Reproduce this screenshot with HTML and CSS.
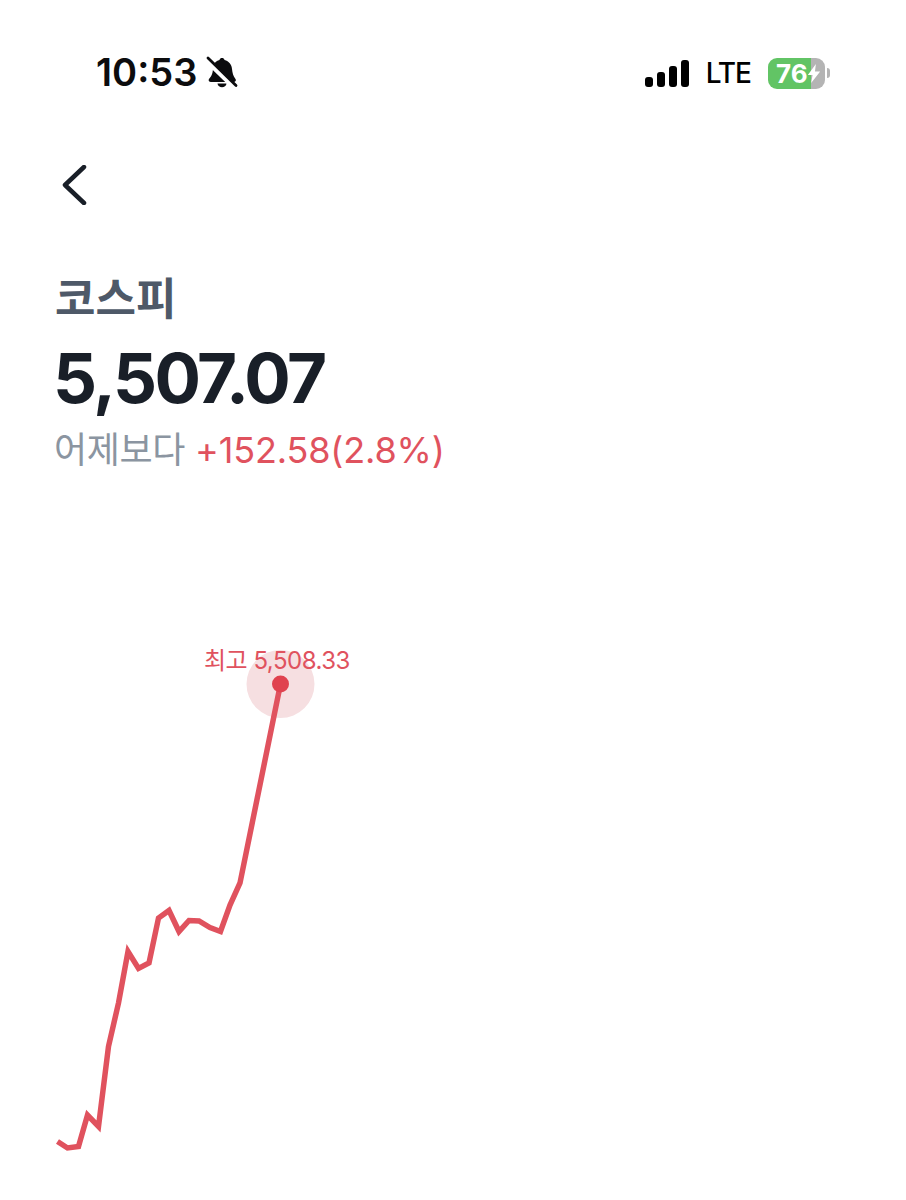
FILE: index.html
```html
<!DOCTYPE html>
<html lang="ko">
<head>
    <meta charset="UTF-8">
    <meta name="viewport" content="width=device-width, initial-scale=1.0">
    <title>코스피</title>
    <link rel="stylesheet" href="styles.css">
</head>
<body>
    <div class="status-bar">
        <div class="status-left">
            <span class="time">10:53</span>
            <svg class="bell" width="32" height="34" viewBox="0 0 32 34">
                <path d="M13.500 4c.6-2.600 4.400-2.600 5 0 4.500 1.200 7 4.500 7.500 9 .4 4 1.200 7 3.500 10 1 1.500 0 3-1.800 3H5c-2 0-3-1.500-2-3 1.700-2 3-4 3.500-6.500.5-2.500.5-4.500 1-6.500.7-3 3-5.500 6-6z" fill="#0c0c0e"/>
                <path d="M11.500 27.500h9c-.6 5-8.400 5-9 0z" fill="#0c0c0e"/>
                <path d="M1 5 29 32" stroke="#fff" stroke-width="5"/>
                <path d="M2 2 30 29.500" stroke="#0c0c0e" stroke-width="2.800" stroke-linecap="round"/>
            </svg>
        </div>
        <div class="status-right">
            <div class="signal">
                <span class="bar bar-1"></span>
                <span class="bar bar-2"></span>
                <span class="bar bar-3"></span>
                <span class="bar bar-4"></span>
            </div>
            <span class="network">LTE</span>
            <div class="battery">
                <div class="battery-body">
                    <span class="battery-level">76</span>
                    <svg class="bolt" width="14" height="19" viewBox="0 0 13 20">
                        <path d="M8.500 0 0 11.500h5L3.500 20 13 8H7.500z" fill="#fff"/>
                    </svg>
                </div>
                <span class="battery-cap"></span>
            </div>
        </div>
    </div>

    <div class="back">
        <svg width="26" height="40" viewBox="0 0 26 40">
            <path d="M23 2 4 20 23 38" fill="none" stroke="#191f28" stroke-width="4.500" stroke-linecap="round" stroke-linejoin="round"/>
        </svg>
    </div>

    <div class="summary">
        <h1 class="name">코스피</h1>
        <div class="price">5,507.07</div>
        <div class="change">
            <span class="change-label">어제보다</span>
            <span class="change-value">+152.58(2.8%)</span>
        </div>
    </div>

    <div class="chart">
        <svg class="chart-line" width="906" height="560" viewBox="0 0 906 560">
            <circle cx="280.500" cy="84" r="34" fill="#f6dfe1"/>
            <polyline points="57.500,541.500 67.500,548 78.500,546.500 87.500,515 98.500,526.500 108.500,446.500 118.500,403 128,351.500 138.500,368.500 149,363 158.500,318 169,310.500 179,331.500 189,320.500 199,321 210,327.500 220.500,331.500 230,305 240,283 280.500,84" fill="none" stroke="#e0525e" stroke-width="5.500" stroke-linejoin="miter"/>
            <circle cx="280.500" cy="84" r="8.500" fill="#e0424f"/>
        </svg>
        <span class="high-label">최고 5,508.33</span>
    </div>
</body>
</html>
```

FILE: styles.css
```css
body {
    margin: 0;
    background-color: #fff;
    font-family: Inter, "Noto Sans CJK KR", sans-serif;
    color: #191f28;
}
.status-bar {
    display: flex;
    justify-content: space-between;
    align-items: center;
    height: 50px;
    padding: 48px 76px 0 96px;
}
.status-left {
    display: flex;
    align-items: center;
    gap: 9px;
}
.time {
    font-size: 38px;
    font-weight: 600;
    line-height: 48px;
    margin-top: -2px;
    color: #0c0c0e;
}
.status-right {
    display: flex;
    align-items: center;
}
.signal {
    display: flex;
    align-items: flex-end;
    gap: 4px;
    height: 28px;
}
.bar {
    width: 8px;
    background-color: #000;
    border-radius: 3px;
}
.bar-1 { height: 10px; }
.bar-2 { height: 15px; }
.bar-3 { height: 21px; }
.bar-4 { height: 27px; }
.network {
    margin-left: 17px;
    font-size: 28px;
    font-weight: 500;
    letter-spacing: -1px;
    color: #000;
}
.battery {
    display: flex;
    align-items: center;
    margin-left: 17px;
}
.battery-body {
    display: flex;
    align-items: center;
    width: 57px;
    height: 31px;
    border-radius: 9px;
    background: linear-gradient(to right, #62c465 0 43px, #b4b4b4 43px);
}
.battery-level {
    margin-left: 8px;
    font-size: 26px;
    font-weight: 700;
    line-height: 31px;
    color: #fff;
}
.bolt {
    margin-left: -1px;
}
.battery-cap {
    width: 3px;
    height: 10px;
    margin-left: 2px;
    background-color: #b4b4b4;
    border-radius: 0 3px 3px 0;
}
.back {
    display: flex;
    padding: 67px 0 0 61px;
}
.summary {
    padding: 65px 0 0 55px;
}
.name {
    margin: 0;
    font-size: 44px;
    font-weight: 700;
    line-height: 58px;
    color: #4e5968;
}
.price {
    margin-top: 10px;
    margin-left: -2px;
    font-size: 69px;
    font-weight: 700;
    line-height: 80px;
    letter-spacing: -2.6px;
}
.change {
    margin-top: 8px;
    margin-left: -1px;
    font-size: 36px;
    line-height: 48px;
}
.change-label {
    letter-spacing: -0.4px;
    color: #8b95a1;
}
.change-value {
    letter-spacing: -0.15px;
    color: #e0525e;
}
.chart {
    position: relative;
    margin-top: 126px;
}
.chart-line {
    display: block;
}
.high-label {
    position: absolute;
    left: 204px;
    top: 41px;
    font-size: 24px;
    letter-spacing: -0.5px;
    color: #e0525e;
}
```
